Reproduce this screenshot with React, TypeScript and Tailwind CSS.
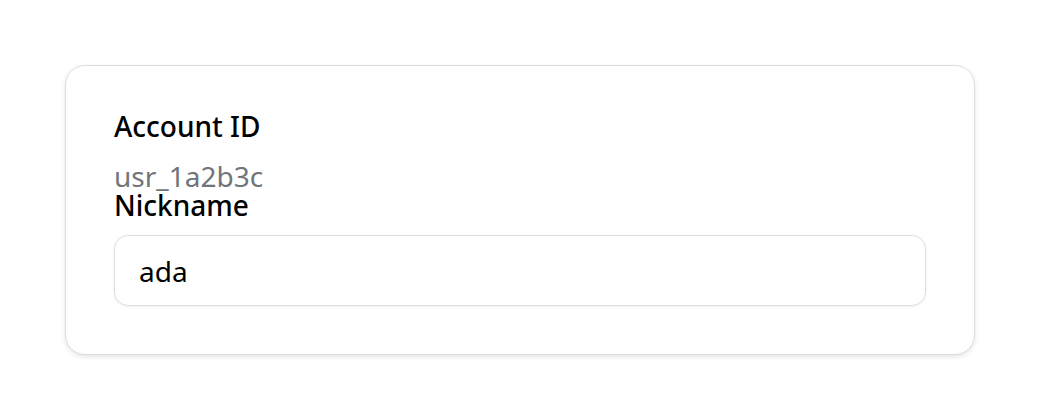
import React, { useState } from 'react';

const App: React.FC = () => {
  const [nickname, setNickname] = useState('ada');

  return (
    <div className="min-h-[420px] bg-white px-[65px] pt-[65px] font-['Noto_Sans',sans-serif]">
      <div className="flex flex-col rounded-[20px] border border-[#dddddd] bg-white px-12 pt-[45px] pb-12 shadow-[0_2px_5px_rgba(0,0,0,0.1)]">
        <div className="text-[28px] leading-[30px] font-medium text-black">Account ID</div>
        <div className="mt-5 text-[28px] leading-[30px] text-[#71757b]">usr_1a2b3c</div>
        <label htmlFor="nickname" className="text-[28px] leading-[29px] font-medium text-black">
          Nickname
        </label>
        <input
          id="nickname"
          value={nickname}
          onChange={(e) => setNickname(e.target.value)}
          className="mt-[15px] h-[71px] w-full rounded-[14px] border border-[#dddddd] px-6 text-[28px] text-black outline-none shadow-[0_1px_3px_rgba(0,0,0,0.06)]"
        />
      </div>
    </div>
  );
};

export default App;
